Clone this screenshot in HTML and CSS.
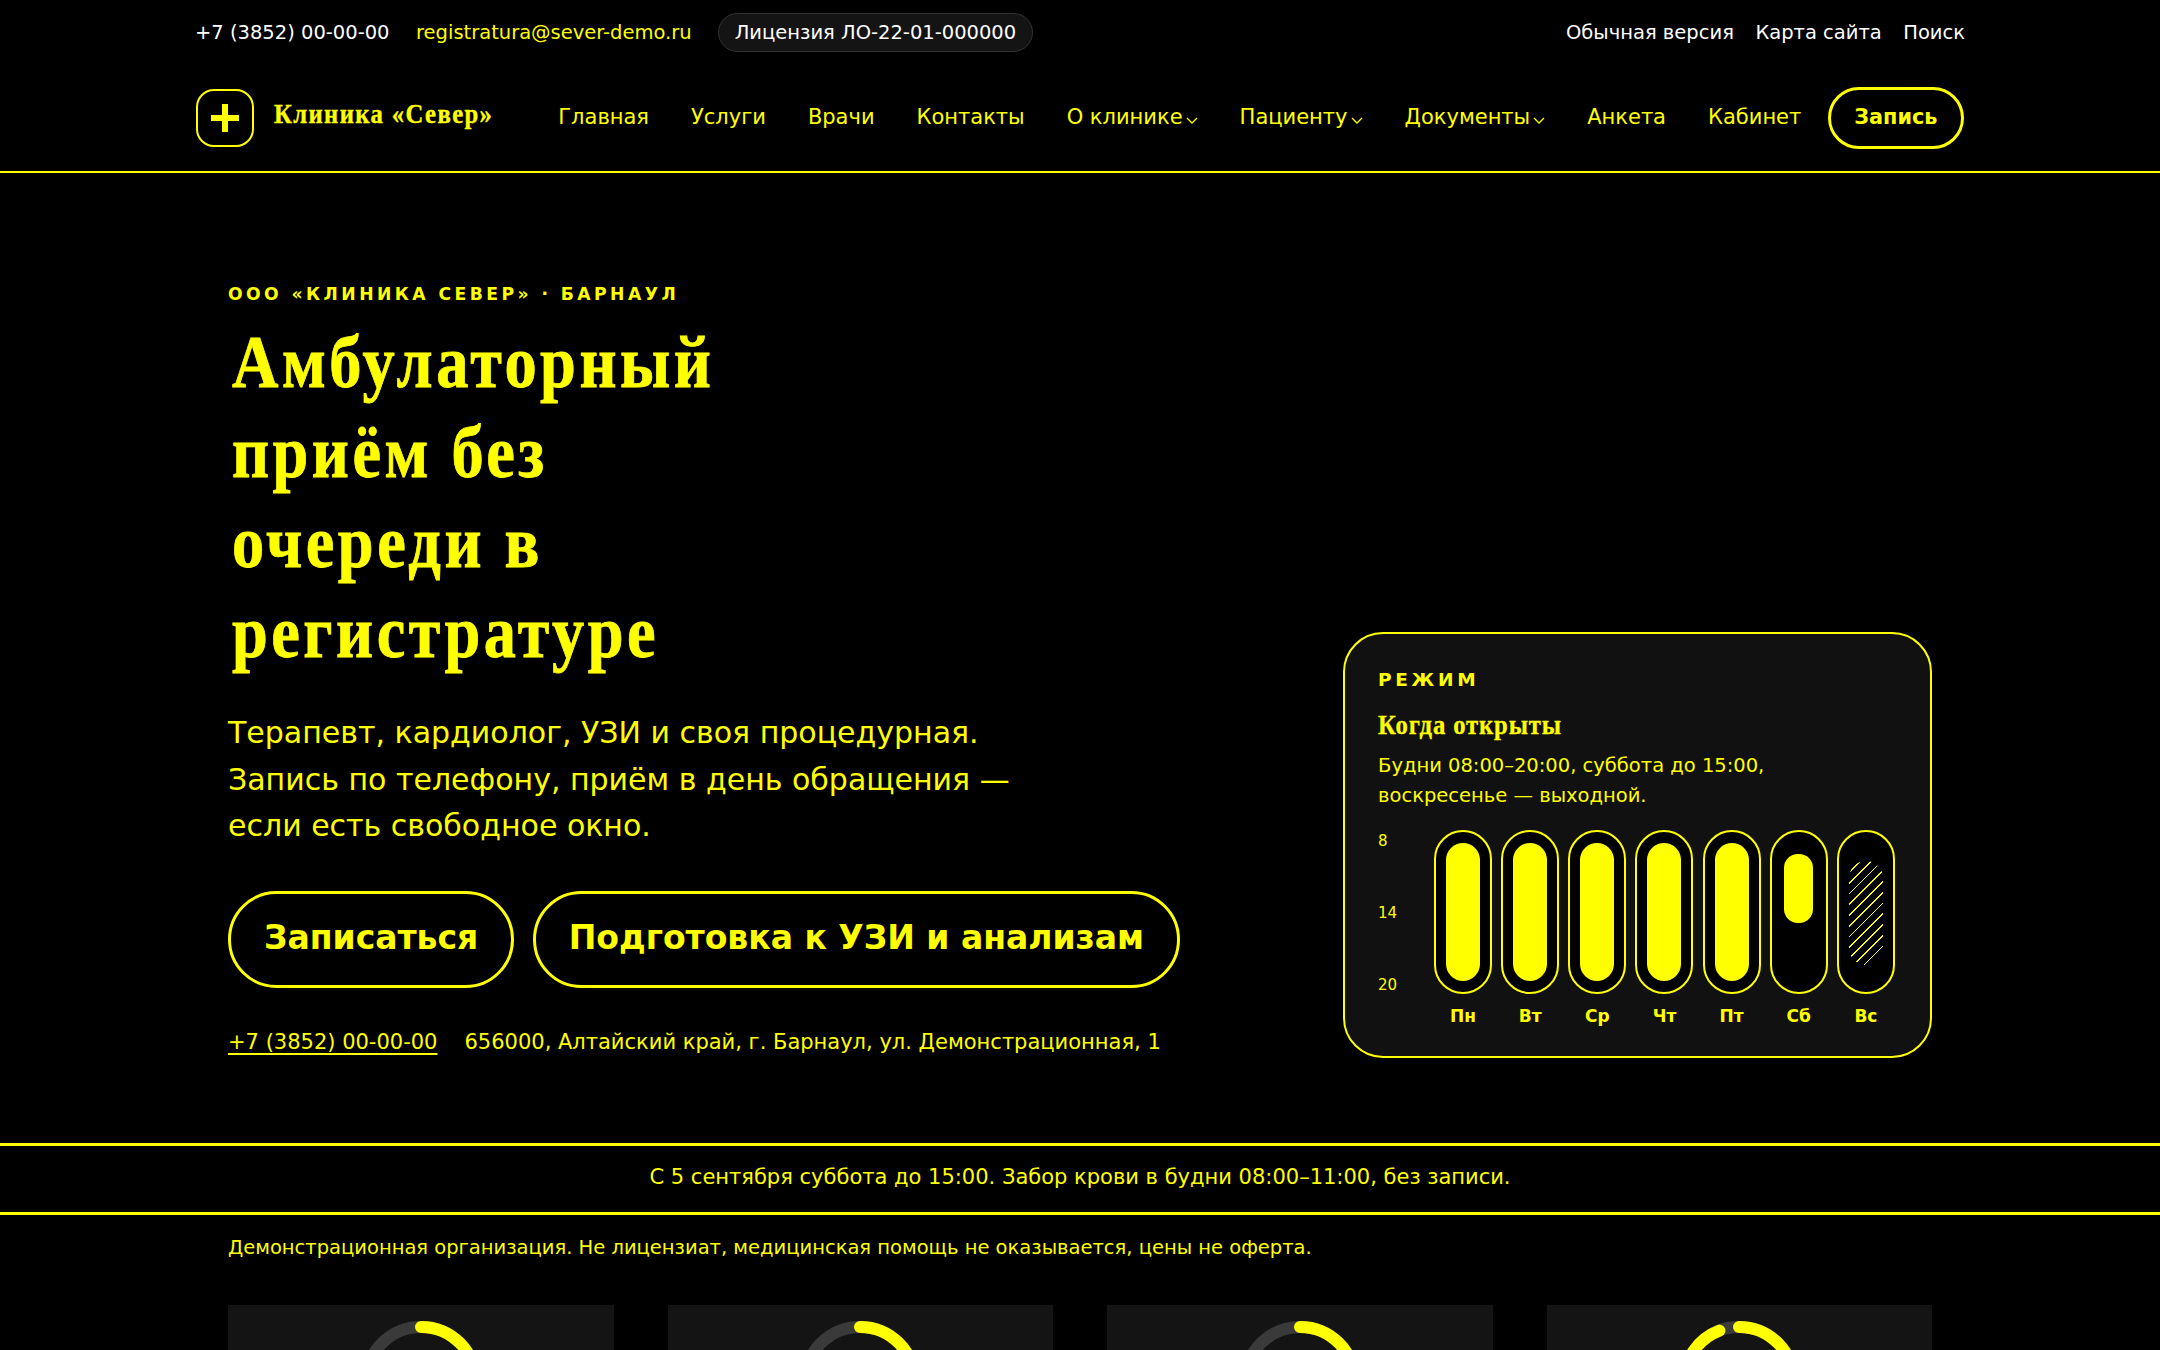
FILE: index.html
```html
<!DOCTYPE html>
<html lang="ru">
<head>
<meta charset="utf-8">
<title>Клиника «Север»</title>
<link rel="stylesheet" href="styles.css">
</head>
<body>
<div class="topbar">
  <div class="topbar-left">
    <a class="white">+7 (3852) 00-00-00</a>
    <a class="yellow">registratura@sever-demo.ru</a>
    <span class="license">Лицензия ЛО-22-01-000000</span>
  </div>
  <div class="topbar-right">
    <a>Обычная версия</a><a>Карта сайта</a><a>Поиск</a>
  </div>
</div>
<header class="header">
  <div class="header-inner">
    <a class="brand">
      <span class="brand-mark"><svg viewBox="0 0 28 28" width="28" height="28"><path d="M14 0v28M0 14h28" stroke="#ff0" stroke-width="6" fill="none"/></svg></span>
      <span class="brand-name">Клиника «Север»</span>
    </a>
    <nav class="nav">
      <a>Главная</a><a>Услуги</a><a>Врачи</a><a>Контакты</a>
      <a class="has-sub">О клинике<svg class="chev" viewBox="0 0 12 7"><path d="M1 1l5 5 5-5" fill="none" stroke="#ff0" stroke-width="1.3"/></svg></a>
      <a class="has-sub">Пациенту<svg class="chev" viewBox="0 0 12 7"><path d="M1 1l5 5 5-5" fill="none" stroke="#ff0" stroke-width="1.3"/></svg></a>
      <a class="has-sub">Документы<svg class="chev" viewBox="0 0 12 7"><path d="M1 1l5 5 5-5" fill="none" stroke="#ff0" stroke-width="1.3"/></svg></a>
      <a>Анкета</a><a>Кабинет</a>
      <a class="nav-cta">Запись</a>
    </nav>
  </div>
</header>
<main class="hero">
  <div class="hero-copy">
    <p class="eyebrow">ООО «КЛИНИКА СЕВЕР» · БАРНАУЛ</p>
    <h1>Амбулаторный приём без очереди в регистратуре</h1>
    <p class="lead">Терапевт, кардиолог, УЗИ и своя процедурная. Запись по телефону, приём в день обращения — если есть свободное окно.</p>
    <div class="actions">
      <a class="btn">Записаться</a>
      <a class="btn">Подготовка к УЗИ и анализам</a>
    </div>
    <p class="contacts"><a class="tel">+7 (3852) 00-00-00</a><span>656000, Алтайский край, г. Барнаул, ул. Демонстрационная, 1</span></p>
  </div>
  <aside class="panel">
    <p class="panel-label">РЕЖИМ</p>
    <h2>Когда открыты</h2>
    <p class="panel-text">Будни 08:00–20:00, суббота до 15:00, воскресенье — выходной.</p>
    <div class="chart">
      <div class="axis"><span>8</span><span>14</span><span>20</span></div>
      <div class="days">
        <div class="day"><div class="track"><div class="fill"></div></div><b>Пн</b></div>
        <div class="day"><div class="track"><div class="fill"></div></div><b>Вт</b></div>
        <div class="day"><div class="track"><div class="fill"></div></div><b>Ср</b></div>
        <div class="day"><div class="track"><div class="fill"></div></div><b>Чт</b></div>
        <div class="day"><div class="track"><div class="fill"></div></div><b>Пт</b></div>
        <div class="day"><div class="track"><div class="fill short"></div></div><b>Сб</b></div>
        <div class="day"><div class="track"><div class="closed"></div></div><b>Вс</b></div>
      </div>
    </div>
  </aside>
</main>
<div class="notice">С 5 сентября суббота до 15:00. Забор крови в будни 08:00–11:00, без записи.</div>
<p class="disclaimer">Демонстрационная организация. Не лицензиат, медицинская помощь не оказывается, цены не оферта.</p>
<section class="cards">
  <div class="card"><svg class="ring" viewBox="0 0 122 122"><circle cx="61" cy="61" r="55" class="ring-bg"/><circle cx="61" cy="61" r="55" class="ring-val" stroke-dasharray="120 400" transform="rotate(-90 61 61)"/></svg></div>
  <div class="card"><svg class="ring" viewBox="0 0 122 122"><circle cx="61" cy="61" r="55" class="ring-bg"/><circle cx="61" cy="61" r="55" class="ring-val" stroke-dasharray="120 400" transform="rotate(-90 61 61)"/></svg></div>
  <div class="card"><svg class="ring" viewBox="0 0 122 122"><circle cx="61" cy="61" r="55" class="ring-bg"/><circle cx="61" cy="61" r="55" class="ring-val" stroke-dasharray="120 400" transform="rotate(-90 61 61)"/></svg></div>
  <div class="card"><svg class="ring" viewBox="0 0 122 122"><circle cx="61" cy="61" r="55" class="ring-bg"/><circle cx="61" cy="61" r="55" class="ring-val" stroke-dasharray="325 400" transform="rotate(-90 61 61)"/></svg></div>
</section>
</body>
</html>
```
FILE: styles.css
```css
* { box-sizing: border-box; }
html, body { margin: 0; padding: 0; }
body { height: 1350px; overflow: hidden; background: #000; color: #ff0; font-family: "DejaVu Sans", sans-serif; font-size: 20px; }
a { color: inherit; text-decoration: none; }
p, h1, h2 { margin: 0; }

.topbar { width: 1770px; margin: 0 auto; height: 65px; padding-bottom: 1px; display: flex; justify-content: space-between; align-items: center; color: #fff; font-size: 19.5px; }
.topbar-left { display: flex; align-items: center; gap: 26.5px; }
.topbar-right { display: flex; gap: 21.5px; }
.yellow { color: #ff0; }
.license { height: 39px; display: flex; align-items: center; padding: 0 15.5px; border: 1px solid #333; border-radius: 20px; background: #141414; }

.header { border-bottom: 2px solid #ff0; height: 108px; }
.header-inner { width: 1768px; margin: 0 auto; height: 106px; display: flex; justify-content: space-between; align-items: center; }
.brand { display: flex; align-items: center; gap: 20px; }
.brand-mark { width: 58px; height: 58px; border: 2px solid #ff0; border-radius: 18px; display: flex; align-items: center; justify-content: center; }
.brand-name { display: inline-block; margin-bottom: 8px; font-family: "Liberation Serif", serif; font-weight: 700; font-size: 28px; letter-spacing: 1.6px; -webkit-text-stroke: 0.4px #ff0; transform: scaleX(0.88); transform-origin: 0 50%; white-space: nowrap; }
.nav { display: flex; align-items: center; gap: 42px; font-size: 21px; }
.nav a { padding-bottom: 2.5px; }
.has-sub { display: flex; align-items: flex-end; gap: 3px; }
.chev { width: 12px; height: 7px; margin-bottom: 5px; }
.nav .nav-cta { height: 62px; margin-left: -15.5px; padding: 0 23.5px 2.5px; display: flex; align-items: center; border: 3px solid #ff0; border-radius: 31px; font-weight: 700; font-size: 20.8px; }

.hero { width: 1704px; height: 970px; margin: 0 auto; padding-bottom: 85px; display: flex; justify-content: space-between; align-items: flex-end; }
.hero-copy { align-self: flex-start; width: 960px; padding-top: 110px; }
.eyebrow { font-size: 17.2px; font-weight: 700; letter-spacing: 3.44px; line-height: 22px; }
h1 { width: 660px; margin: 11.5px 0 0 4px; font-family: "Liberation Serif", serif; font-weight: 700; font-size: 74px; line-height: 90px; letter-spacing: 4px; -webkit-text-stroke: 0.8px #ff0; transform: scaleX(0.87); transform-origin: 0 0; }
.lead { width: 800px; margin-top: 33.5px; font-size: 30px; line-height: 46.5px; }
.actions { display: flex; gap: 18.5px; margin-top: 41.5px; }
.btn { height: 97px; padding: 0 33px 4px; display: flex; align-items: center; border: 3px solid #ff0; border-radius: 49px; font-size: 33px; font-weight: 700; white-space: nowrap; }
.contacts { margin-top: 42px; font-size: 21px; line-height: 24px; display: flex; gap: 27px; }
.tel { text-decoration: underline; text-underline-offset: 4px; }

.panel { width: 589px; height: 426px; padding: 35px 35px 30px 33px; border: 2px solid #ff0; border-radius: 40px; background: #111; }
.panel-label { font-size: 18.5px; font-weight: 700; letter-spacing: 3.7px; }
h2 { margin-top: 20px; font-family: "Liberation Serif", serif; font-size: 28px; letter-spacing: 1px; line-height: 30px; -webkit-text-stroke: 0.3px #ff0; transform: scaleX(0.88); transform-origin: 0 0; }
.panel-text { margin-top: 11px; font-size: 19.5px; line-height: 30px; }
.chart { display: flex; margin-top: 19px; gap: 17px; }
.axis { width: 39px; height: 162px; margin-top: 2px; display: flex; flex-direction: column; justify-content: space-between; font-size: 15px; }
.days { flex: 1; display: flex; justify-content: space-between; }
.day { width: 58px; display: flex; flex-direction: column; align-items: center; gap: 12px; font-size: 17px; }
.track { width: 58px; height: 164px; border: 2px solid #ff0; border-radius: 29px; background: #000; padding: 11px 10px; }
.fill { height: 100%; background: #ff0; border-radius: 17px; }
.fill.short { height: 69px; margin: 11px 2.5px 0; border-radius: 14px; }
.closed { height: 104px; margin-top: 18px; border-radius: 17px; background: repeating-linear-gradient(135deg, #ff0 0 1.2px, transparent 1.2px 7.6px); }

.notice { height: 72px; padding-bottom: 4px; border-top: 3px solid #ff0; border-bottom: 3px solid #ff0; display: flex; align-items: center; justify-content: center; font-size: 21px; }
.disclaimer { width: 1704px; margin: 21px auto 0; font-size: 19.5px; line-height: 23px; }
.cards { width: 1704px; margin: 46px auto 0; display: grid; grid-template-columns: repeat(4, 1fr); gap: 54px; }
.card { height: 45px; overflow: hidden; background: #141414; padding-top: 16px; display: flex; justify-content: center; align-items: flex-start; }
.ring { width: 122px; height: 122px; flex: none; }
.ring-bg, .ring-val { fill: none; stroke-width: 12; }
.ring-bg { stroke: #3a3a3a; }
.ring-val { stroke: #ff0; stroke-linecap: round; }
```
